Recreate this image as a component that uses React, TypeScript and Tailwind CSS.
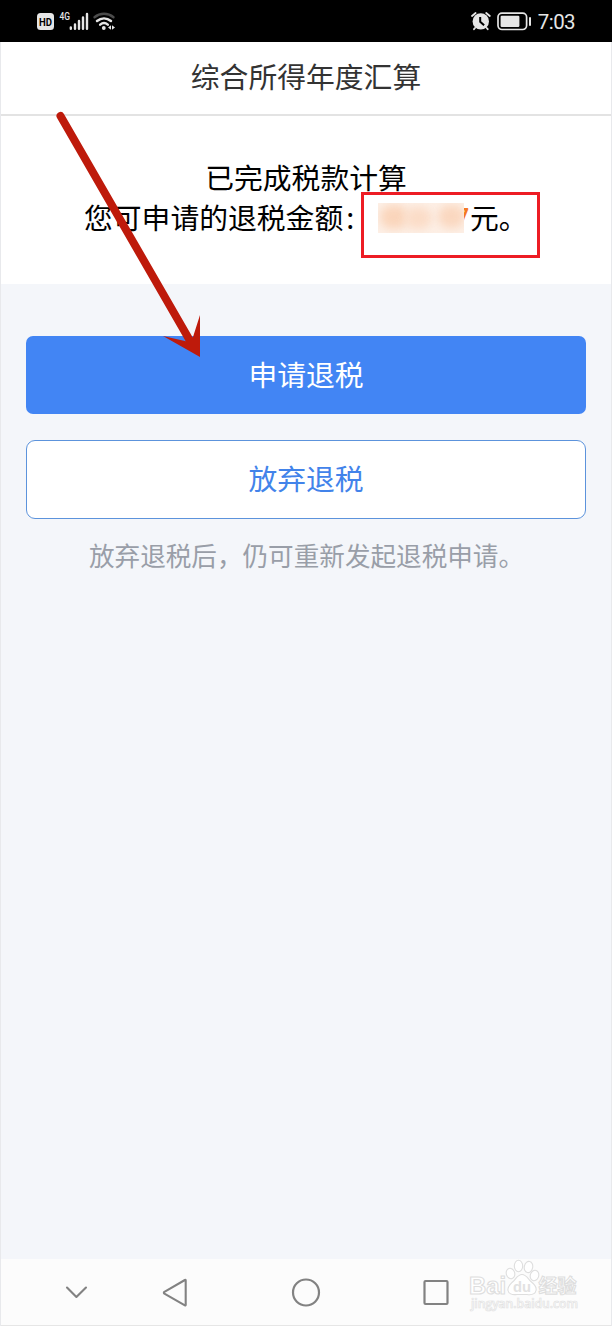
import React from 'react';

const StatusBar = () => (
  <header className="flex h-[42px] shrink-0 items-center justify-between bg-black pl-[36px] pr-[37px] text-[#e6e6e6]">
    <svg width="80" height="42" viewBox="0 0 80 42" fill="none">
      <rect x="1" y="13" width="17" height="17" rx="3.5" fill="#e6e6e6" />
      <text x="9.5" y="25.6" textAnchor="middle" textLength="13" lengthAdjust="spacingAndGlyphs" fontFamily="Roboto, sans-serif" fontSize="10.5" fontWeight="700" fill="#000">HD</text>
      <text x="23.5" y="20" textLength="10.5" lengthAdjust="spacingAndGlyphs" fontFamily="Roboto, sans-serif" fontSize="10" fontWeight="500" fill="#e6e6e6">4G</text>
      <g stroke="#e6e6e6" strokeWidth="2.4" strokeLinecap="round">
        <path d="M34.8 27.5v1.2M39 24.5v4.2M43 21v7.7M47 17.5v11.2M51 14v14.7" />
      </g>
      <path d="M58.5 17.2c5.6-4.6 13.4-4.6 19 0" stroke="#4b4b4b" strokeWidth="2.4" strokeLinecap="round" />
      <path d="M61 21c4.2-3.5 9.8-3.5 14 0M64.2 24.6c2.3-1.9 5.3-1.9 7.6 0" stroke="#e6e6e6" strokeWidth="2.5" strokeLinecap="round" />
      <circle cx="67.8" cy="28" r="1.9" fill="#e6e6e6" />
      <path d="M75 25.2v4.6l-3-2.3zM76 25.2v4.6l3-2.3z" fill="#e6e6e6" />
    </svg>
    <div className="flex items-center">
      <svg width="60" height="42" viewBox="0 0 60 42" fill="none">
        <circle cx="9.8" cy="21.4" r="8.2" fill="#e6e6e6" />
        <path d="M1 16l3.6-3M15.2 13l3.6 3M4 28l-1 1.2M15.7 28l1 1.2" stroke="#e6e6e6" strokeWidth="1.8" strokeLinecap="round" />
        <path d="M9.2 17v4.7l3.9 3.6" stroke="#000" strokeWidth="2" />
        <rect x="27" y="13.1" width="28.6" height="16.4" rx="4" stroke="#e6e6e6" strokeWidth="1.7" />
        <rect x="29.6" y="15.7" width="18.8" height="11.3" rx="1.2" fill="#e6e6e6" />
        <path d="M59 18v7" stroke="#e6e6e6" strokeWidth="2" strokeLinecap="round" />
      </svg>
      <span className="ml-[7px] pt-[2px] font-[Roboto,sans-serif] text-[20.5px] leading-none tracking-[-0.6px]">7:03</span>
    </div>
  </header>
);

const Arrow = () => (
  <svg className="pointer-events-none absolute left-0 top-0" width="240" height="370" viewBox="0 0 240 370">
    <path d="M60.5 116L189 339" stroke="#be1a0b" strokeWidth="8" strokeLinecap="round" />
    <path d="M200 357L163 336L187 341.5L193 337L200 315Z" fill="#be1a0b" />
  </svg>
);

const Watermark = () => (
  <svg className="absolute left-[464px] top-0" width="120" height="66" viewBox="465 1259 120 66">
    <g fill="#fff" stroke="#dedede" strokeWidth="1.1">
      <ellipse cx="518.5" cy="1266" rx="4.2" ry="5.7" />
      <ellipse cx="528.5" cy="1267" rx="4.2" ry="5.7" transform="rotate(12 528.5 1267)" />
      <ellipse cx="510.5" cy="1273.5" rx="4.2" ry="5.3" transform="rotate(-18 510.5 1273.5)" />
      <ellipse cx="534.5" cy="1275.5" rx="4.2" ry="5.3" transform="rotate(18 534.5 1275.5)" />
      <path d="M522 1274.5c4.5 0 6 4.5 9.5 7.5 3 2.5 5.5 5 4.5 8.5-1 4.5-5.5 4.500-9 4h-10c-4 .5-8 .3-9-4-.8-3.500 2-6 4.500-8.500 3.500-3 5-7.500 9.500-7.500z" />
      <g fontFamily="'Liberation Sans', 'Noto Sans CJK SC', sans-serif" fontWeight="700">
        <text x="469" y="1294" fontSize="23.5" textLength="37" lengthAdjust="spacingAndGlyphs">Bai</text>
        <text x="513" y="1292" fontSize="15" textLength="18" lengthAdjust="spacingAndGlyphs" fill="#e2e2e2" stroke="none">du</text>
        <text x="538.5" y="1293" fontSize="19">经验</text>
      </g>
    </g>
    <text x="471" y="1307.5" fontFamily="'Open Sans', sans-serif" fontSize="12" fontWeight="600" textLength="107" lengthAdjust="spacingAndGlyphs" fill="#fff" stroke="#e2e2e2" strokeWidth="0.7">jingyan.baidu.com</text>
  </svg>
);

const NavBar = () => (
  <nav className="relative h-[67px] shrink-0 border-b border-[#e6e6e6] bg-[#fcfcfc]">
    <svg width="610" height="66" viewBox="1 1259 610 66" fill="none" stroke="#828282" strokeWidth="2.1" strokeLinecap="round" strokeLinejoin="round">
      <path d="M67 1287.5l9.4 9.5 9.6-9.5" />
      <path d="M185.7 1280.5v24.3q0 .9-.8.5l-20.5-11.7q-1.1-.9 0-1.8l20.5-11.8q.8-.4.8.5z" />
      <circle cx="306" cy="1292.5" r="13" strokeWidth="2.2" />
      <rect x="424.5" y="1281" width="23" height="23" rx="1" strokeWidth="2.2" />
    </svg>
    <Watermark />
  </nav>
);

export default function App() {
  return (
    <div className="relative flex h-[1326px] w-[612px] flex-col overflow-hidden bg-[#f4f6fa] font-['Noto_Sans_CJK_SC',sans-serif]">
      <StatusBar />
      <div className="flex flex-1 flex-col border-x border-[#e8e9ec]">
        <h1 className="flex h-[74px] items-center justify-center border-b-2 border-[#e3e3e3] bg-white pb-[3px] text-[28.8px] leading-none text-[#333]">
          综合所得年度汇算
        </h1>
        <section className="h-[168px] bg-white pt-[41px] text-center text-[28.8px] leading-[39px] text-black">
          <p>已完成税款计算</p>
          <div className="relative mt-px flex pl-[83px]">
            <span className="whitespace-nowrap">您可申请的退税金额</span>
            <span className="ml-[3px]">:</span>
            <div className="absolute left-[360px] top-[-5px] flex h-[66px] w-[179px] items-start border-3 border-[#ed1c24] pl-[91px] pt-[2px]">
              <span className="h-[34px] w-[15px] text-left font-[Roboto,sans-serif] text-[25px] font-medium leading-[43px] text-[#f47a20]">7</span>
              <span className="whitespace-nowrap">元。</span>
              <span className="absolute left-[14px] top-[8px] h-[30px] w-[86px] overflow-hidden bg-[#fdf0e7]">
                <span className="absolute left-[2px] top-[2px] h-[24px] w-[28px] rounded-full bg-[#fad5bb] blur-[5px]" />
                <span className="absolute left-[27px] top-[4px] h-[22px] w-[27px] rounded-full bg-[#fbdcc7] blur-[5px]" />
                <span className="absolute left-[60px] top-[2px] h-[23px] w-[27px] rounded-full bg-[#fad7bf] blur-[5px]" />
              </span>
            </div>
          </div>
        </section>
        <main className="flex flex-1 flex-col px-[25px] pt-[52px]">
          <button className="h-[78px] rounded-[7px] bg-[#4285f4] pb-[2px] text-[28.8px] leading-none text-white">
            申请退税
          </button>
          <button className="mt-[26px] h-[79px] rounded-[9px] border-[1.5px] border-[#5c93dc] bg-white pb-[3px] text-[28.8px] leading-none text-[#4283ea]">
            放弃退税
          </button>
          <p className="mt-[17px] pl-[1px] text-center text-[25.6px] leading-[38px] whitespace-nowrap text-[#999ea8]">
            放弃退税后，仍可重新发起退税申请。
          </p>
        </main>
        <NavBar />
      </div>
      <Arrow />
    </div>
  );
}
